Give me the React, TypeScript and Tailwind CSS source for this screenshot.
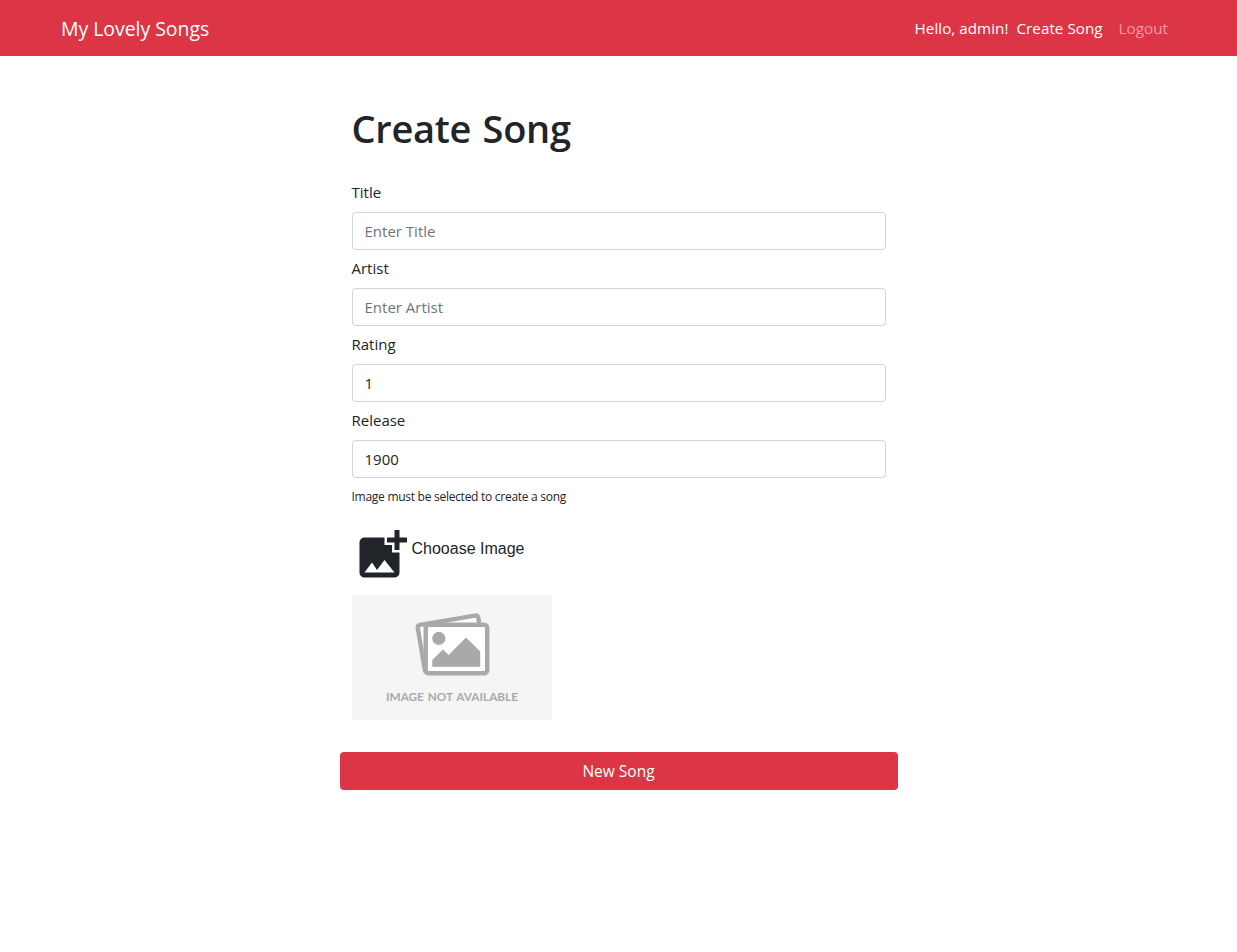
import React from "react";
import { MdAddPhotoAlternate } from "react-icons/md";

const fields = [
  { label: "Title", placeholder: "Enter Title", value: "" },
  { label: "Artist", placeholder: "Enter Artist", value: "" },
  { label: "Rating", placeholder: "", value: "1" },
  { label: "Release", placeholder: "", value: "1900" },
];

function Placeholder() {
  return (
    <svg viewBox="0 0 200 125" className="block h-[125px] w-[200px]" role="img">
      <rect width="200" height="125" fill="#f5f5f5" />
      <g fill="#fff" stroke="#a9a9a9" strokeWidth="4.4" strokeLinejoin="round">
        <path d="M75 77.500 L73 76 L65.800 33 Q65.300 30.300 68 29.800 L123 20.600 Q125.700 20.300 126.300 23 L127.300 28" />
        <rect x="73.700" y="29.700" width="61.500" height="48.600" rx="3" />
      </g>
      <circle cx="86.800" cy="43.300" r="6.600" fill="#a9a9a9" />
      <path d="M80.300 71.800V65L91 54.600L96.700 60L114 42.400L128.200 56.500V71.800Z" fill="#a9a9a9" />
      <text x="34" y="106" textLength="132" lengthAdjust="spacingAndGlyphs" fontFamily="Lato, sans-serif" fontWeight="700" fontSize="11.500" wordSpacing="1" fill="#aaaaaa">
        IMAGE NOT AVAILABLE
      </text>
    </svg>
  );
}

export default function App() {
  return (
    <div className="min-h-[952px] bg-white font-['Open_Sans','Noto_Sans',sans-serif] text-base leading-6 text-[#212529]">
      <nav className="flex h-14 items-center justify-between bg-[#dc3545] pr-[69px] pl-[61px] text-white">
        <a className="pt-0.5 text-[19.5px] tracking-[-0.05px]">My Lovely Songs</a>
        <div className="flex text-[15.2px] tracking-[0.04px]">
          <span className="mr-2">Hello, admin!</span>
          <span className="mr-4">Create Song</span>
          <span className="text-white/50">Logout</span>
        </div>
      </nav>
      <main className="mx-auto w-[558px] pt-12">
        <form className="px-3">
          <h1 className="mb-7 text-[38px] leading-12 font-semibold tracking-[-0.3px] [word-spacing:2px]">Create Song</h1>
          {fields.map((f) => (
            <label key={f.label} className="mb-1.5 block text-[15px]">
              <span className="mb-2 block">{f.label}</span>
              <input className="block h-[38px] w-full rounded border border-[#ced4da] px-3 placeholder:text-[#6c757d]" placeholder={f.placeholder} defaultValue={f.value} />
            </label>
          ))}
          <p className="pt-px text-[12px] leading-6 tracking-[-0.27px]">Image must be selected to create a song</p>
          <div className="mt-4 mb-2.5 flex">
            <MdAddPhotoAlternate className="size-[60px]" />
            <span className="pt-3 font-['Liberation_Sans',sans-serif]">Chooase Image</span>
          </div>
          <Placeholder />
        </form>
        <button className="mt-8 block h-[38px] w-full rounded bg-[#dc3545] text-[15.5px] text-white">New Song</button>
      </main>
    </div>
  );
}
